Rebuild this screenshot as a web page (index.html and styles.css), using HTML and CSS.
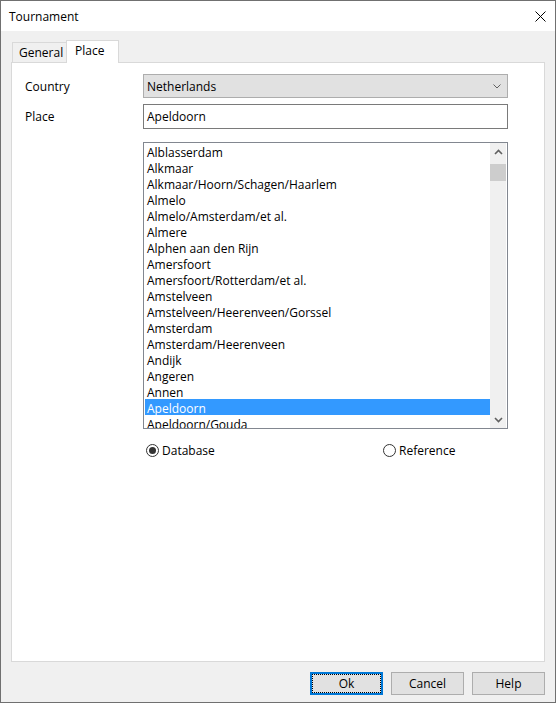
FILE: index.html
```html
<!DOCTYPE html>
<html>
<head>
<meta charset="utf-8">
<link rel="stylesheet" href="styles.css">
</head>
<body>
<div class="window">
  <div class="titlebar">
    <span class="title">Tournament</span>
    <svg class="close" width="11" height="11" viewBox="0 0 11 11"><path d="M0.5 0.5 L10.5 10.5 M10.5 0.5 L0.5 10.5" stroke="#000" stroke-width="1" fill="none"/></svg>
  </div>
  <div class="body">
    <div class="tabs">
      <div class="tab">General</div>
      <div class="tab active">Place</div>
    </div>
    <div class="panel">
      <div class="form">
        <div class="lbl">Country</div>
        <div class="combo">
          <span>Netherlands</span>
          <svg class="chev" width="8" height="5" viewBox="0 0 8 5"><path d="M0.5 0.5 L4 4 L7.5 0.5" stroke="#606060" stroke-width="1" fill="none"/></svg>
        </div>
        <div class="lbl lbl2">Place</div>
        <div class="input">Apeldoorn</div>
        <div class="spacer"></div>
        <div class="listbox">
          <div class="items">
            <div class="item">Alblasserdam</div>
            <div class="item">Alkmaar</div>
            <div class="item">Alkmaar/Hoorn/Schagen/Haarlem</div>
            <div class="item">Almelo</div>
            <div class="item">Almelo/Amsterdam/et al.</div>
            <div class="item">Almere</div>
            <div class="item">Alphen aan den Rijn</div>
            <div class="item">Amersfoort</div>
            <div class="item">Amersfoort/Rotterdam/et al.</div>
            <div class="item">Amstelveen</div>
            <div class="item">Amstelveen/Heerenveen/Gorssel</div>
            <div class="item">Amsterdam</div>
            <div class="item">Amsterdam/Heerenveen</div>
            <div class="item">Andijk</div>
            <div class="item">Angeren</div>
            <div class="item">Annen</div>
            <div class="item selected">Apeldoorn</div>
            <div class="item">Apeldoorn/Gouda</div>
          </div>
          <div class="scrollbar">
            <div class="sb-btn"><svg width="9" height="6" viewBox="0 0 9 6"><path d="M1 5 L4.5 1.5 L8 5" stroke="#606060" stroke-width="1.6" fill="none"/></svg></div>
            <div class="thumb"></div>
            <div class="sb-fill"></div>
            <div class="sb-btn"><svg width="9" height="6" viewBox="0 0 9 6"><path d="M1 1 L4.5 4.5 L8 1" stroke="#606060" stroke-width="1.6" fill="none"/></svg></div>
          </div>
        </div>
        <div class="spacer"></div>
        <div class="radios">
          <div class="radio radio-db">
            <svg width="13" height="13" viewBox="0 0 13 13"><circle cx="6.5" cy="6.5" r="6" fill="#fff" stroke="#333" stroke-width="1"/><circle cx="6.5" cy="6.5" r="3.5" fill="#333"/></svg>
            <span>Database</span>
          </div>
          <div class="radio">
            <svg width="13" height="13" viewBox="0 0 13 13"><circle cx="6.5" cy="6.5" r="6" fill="#fff" stroke="#333" stroke-width="1"/></svg>
            <span>Reference</span>
          </div>
        </div>
      </div>
    </div>
    <div class="buttons">
      <div class="btn default">Ok</div>
      <div class="btn">Cancel</div>
      <div class="btn">Help</div>
    </div>
  </div>
</div>
</body>
</html>
```

FILE: styles.css
```css
* { box-sizing: border-box; }
html, body { margin: 0; padding: 0; background: #fff; }
body {
  font-family: "Open Sans", "Noto Sans", sans-serif;
  font-size: 12px;
  color: #000;
}
.window {
  width: 556px;
  height: 703px;
  border: 1px solid #707070;
  background: #f0f0f0;
  display: flex;
  flex-direction: column;
}
.titlebar {
  height: 30px;
  background: #fff;
  display: flex;
  align-items: center;
  justify-content: space-between;
  padding: 0 9px 0 8px;
}
.title { line-height: 16px; margin-top: 1px; }
.close { display: block; }
.body {
  flex: 1;
  display: flex;
  flex-direction: column;
  padding: 9px 10px 7px 10px;
}
.tabs {
  display: flex;
  height: 22px;
  padding-left: 1px;
  align-items: flex-end;
  position: relative;
  z-index: 1;
}
.tab {
  height: 20px;
  border: 1px solid #d9d9d9;
  border-bottom: none;
  background: #f0f0f0;
  padding: 0 6px;
  line-height: 19px;
  width: 55px;
}
.tab.active {
  height: 23px;
  margin-bottom: -1px;
  margin-left: -1px;
  width: 53px;
  background: #fff;
  padding: 0 8px;
  line-height: 19px;
}
.panel {
  height: 600px;
  border: 1px solid #d9d9d9;
  background: #fff;
  padding: 11px 0 0 13px;
}
.form {
  display: grid;
  grid-template-columns: 118px 365px;
}
.lbl {
  height: 24px;
  display: flex;
  align-items: center;
}
.lbl2 { height: 25px; margin-top: 6px; }
.combo {
  height: 24px;
  border: 1px solid #adadad;
  background: #e1e1e1;
  display: flex;
  align-items: center;
  justify-content: space-between;
  padding: 0 6px 0 3px;
}
.chev { display: block; margin-top: 1px; }
.input {
  height: 25px;
  margin-top: 6px;
  border: 1px solid #7a7a7a;
  background: #fff;
  display: flex;
  align-items: center;
  padding: 0 3px;
}
.listbox {
  margin-top: 13px;
  height: 287px;
  border: 1px solid #828790;
  display: flex;
  overflow: hidden;
}
.items {
  flex: 1;
  padding-left: 1px;
  overflow: hidden;
}
.item {
  height: 16px;
  line-height: 16px;
  padding: 2px 0 0 2px;
  white-space: nowrap;
}
.item.selected {
  background: #3399ff;
  color: #fff;
}
.scrollbar {
  width: 16px;
  margin-right: 1px;
  background: #f0f0f0;
  display: flex;
  flex-direction: column;
}
.sb-btn {
  height: 17px;
  display: flex;
  align-items: center;
  justify-content: center;
}
.sb-btn svg { display: block; }
.thumb {
  height: 17px;
  margin-top: 4px;
  background: #cdcdcd;
}
.sb-fill { flex: 1; }
.radios {
  margin-top: 13px;
  display: flex;
  padding-left: 3px;
}
.radio {
  display: flex;
  align-items: center;
  height: 16px;
  gap: 3px;
}
.radio svg { display: block; }
.radio-db { width: 237px; }
.buttons {
  margin-top: 10px;
  display: flex;
  justify-content: flex-end;
  gap: 8px;
}
.btn {
  width: 73px;
  height: 23px;
  border: 1px solid #adadad;
  background: #e1e1e1;
  display: flex;
  align-items: center;
  justify-content: center;
}
.btn.default {
  border: 2px solid #0078d7;
  outline: 1px dotted #000;
  outline-offset: -3px;
}
```
